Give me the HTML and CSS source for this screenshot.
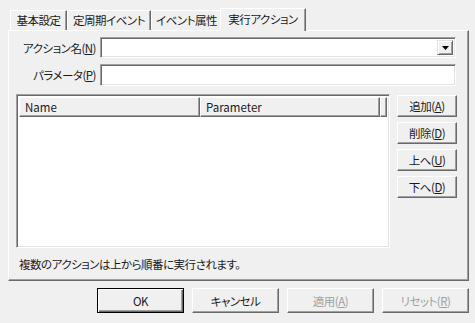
FILE: index.html
```html
<!DOCTYPE html>
<html lang="ja">
<head>
  <meta charset="UTF-8">
  <title>実行アクション</title>
  <link rel="stylesheet" href="styles.css">
</head>
<body>

  <div class="dialog">
    <!-- Tab strip -->
    <div class="tabs">
      <div class="tab tab-basic">基本設定</div>
      <div class="tab tab-cycle">定周期イベント</div>
      <div class="tab tab-attr">イベント属性</div>
      <div class="tab tab-action active">実行アクション</div>
    </div>

    <!-- Tab page -->
    <div class="panel">
      <div class="field-row first">
        <label class="field-label">アクション名(<u>N</u>)</label>
        <div class="combo">
          <span class="combo-btn">
            <svg width="7" height="4" viewBox="0 0 7 4"><path d="M0 0h7L3.5 4z" fill="#000"/></svg>
          </span>
        </div>
      </div>
      <div class="field-row">
        <label class="field-label">パラメータ(<u>P</u>)</label>
        <div class="edit"></div>
      </div>

      <div class="list-area">
        <div class="listview">
          <div class="lv-header">
            <div class="lv-col col-name">Name</div>
            <div class="lv-col col-param">Parameter</div>
            <div class="lv-col col-fill"></div>
          </div>
        </div>
        <div class="side-buttons">
          <button class="btn side">追加(<u>A</u>)</button>
          <button class="btn side">削除(<u>D</u>)</button>
          <button class="btn side">上へ(<u>U</u>)</button>
          <button class="btn side">下へ(<u>D</u>)</button>
        </div>
      </div>

      <p class="note">複数のアクションは上から順番に実行されます。</p>
    </div>

    <!-- Dialog buttons -->
    <div class="footer">
      <button class="btn wide default">OK</button>
      <button class="btn wide">キャンセル</button>
      <button class="btn wide" disabled>適用(<u>A</u>)</button>
      <button class="btn wide" disabled>リセット(<u>R</u>)</button>
    </div>
  </div>

</body>
</html>
```

FILE: styles.css
```css
body {
  margin: 0;
  background-color: #f0f0f0;
  font-family: "Noto Sans CJK JP", sans-serif;
  font-size: 11.5px;
  letter-spacing: -0.5px;
  font-feature-settings: "palt";
  color: #1a1a1a;
}

.dialog {
  width: 475px;
  height: 323px;
  padding: 8px 6px 0 8px;
  box-sizing: border-box;
}

/* tabs */
.tabs {
  display: flex;
  align-items: flex-end;
  height: 22px;
  padding-left: 2px;
}

.tab {
  height: 20px;
  line-height: 18px;
  box-sizing: border-box;
  text-align: center;
  border-top: 1px solid #fff;
  border-left: 1px solid #fff;
  border-right: 1px solid #696969;
  box-shadow: inset -1px 0 0 #a0a0a0;
  background-color: #f0f0f0;
  white-space: nowrap;
}

.tab-basic { width: 57px; }
.tab-cycle { width: 84px; }
.tab-attr { width: 71px; }

.tab.active {
  width: 86px;
  height: 23px;
  line-height: 20px;
  margin: 0 0 -1px -2px;
  position: relative;
  z-index: 1;
}

/* tab page */
.panel {
  width: 461px;
  height: 251px;
  box-sizing: border-box;
  border-top: 1px solid #fff;
  border-left: 1px solid #fff;
  border-right: 1px solid #696969;
  border-bottom: 1px solid #696969;
  box-shadow: inset -1px -1px 0 #a0a0a0;
  padding: 0 12px 0 0;
}

.field-row {
  display: grid;
  grid-template-columns: 87px 1fr;
  column-gap: 4px;
  align-items: center;
  margin-top: 6px;
  height: 22px;
}

.field-row.first {
  height: 21px;
}

.field-label {
  text-align: right;
  white-space: nowrap;
}

.combo,
.edit,
.listview {
  background-color: #fff;
  box-sizing: border-box;
  border-top: 1px solid #a0a0a0;
  border-left: 1px solid #a0a0a0;
  border-right: 1px solid #fff;
  border-bottom: 1px solid #fff;
  box-shadow: inset 1px 1px 0 #696969, inset -1px -1px 0 #e3e3e3;
}

.combo,
.edit {
  height: 100%;
}

.combo {
  display: flex;
  justify-content: flex-end;
  padding: 2px;
}

.combo-btn {
  width: 16px;
  height: 100%;
  box-sizing: border-box;
  display: flex;
  align-items: center;
  justify-content: center;
  background-color: #f0f0f0;
  border-top: 1px solid #e3e3e3;
  border-left: 1px solid #e3e3e3;
  border-right: 1px solid #696969;
  border-bottom: 1px solid #696969;
  box-shadow: inset 1px 1px 0 #fff, inset -1px -1px 0 #a0a0a0;
}

/* list + side buttons */
.list-area {
  display: flex;
  gap: 7px;
  margin: 8px 0 0 7px;
}

.listview {
  width: 374px;
  height: 154px;
  padding: 2px 2px 0 2px;
}

.lv-header {
  display: flex;
  height: 20px;
}

.lv-col {
  box-sizing: border-box;
  height: 20px;
  line-height: 18px;
  padding-left: 5px;
  letter-spacing: 0;
  background-color: #f0f0f0;
  border-top: 1px solid #fff;
  border-left: 1px solid #fff;
  border-right: 1px solid #696969;
  border-bottom: 1px solid #696969;
  box-shadow: inset -1px -1px 0 #a0a0a0;
}

.col-name { width: 181px; }
.col-param { width: 180px; }
.col-fill { flex: 1; }

.side-buttons {
  display: flex;
  flex-direction: column;
  gap: 5px;
  margin-top: 1px;
}

.btn {
  font: inherit;
  letter-spacing: inherit;
  color: #1a1a1a;
  background-color: #f0f0f0;
  box-sizing: border-box;
  padding: 0;
  border-top: 1px solid #fff;
  border-left: 1px solid #fff;
  border-right: 1px solid #696969;
  border-bottom: 1px solid #696969;
  box-shadow: inset -1px -1px 0 #a0a0a0;
}

.btn:disabled {
  color: #a0a0a0;
}

.btn.side {
  width: 60px;
  height: 22px;
}

.note {
  margin: 8px 0 0 10px;
  line-height: 16px;
}

/* footer */
.footer {
  display: flex;
  justify-content: flex-end;
  gap: 8px;
  margin-top: 7px;
}

.btn.wide {
  width: 87px;
  height: 25px;
}

.btn.default {
  border: 1px solid #000;
  box-shadow: inset 1px 1px 0 #fff, inset -1px -1px 0 #696969, inset -2px -2px 0 #a0a0a0;
}
```
